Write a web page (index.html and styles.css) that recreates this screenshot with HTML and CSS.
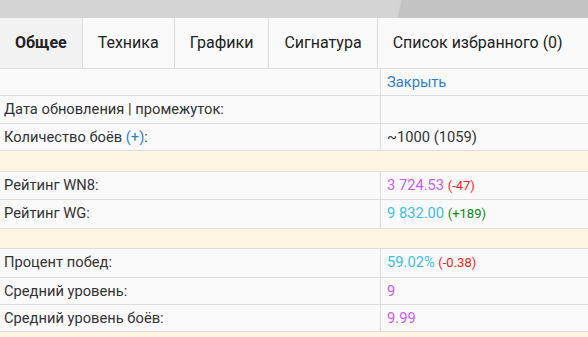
FILE: index.html
```html
<!DOCTYPE html>
<html lang="ru">
<head>
    <meta charset="UTF-8">
    <title>Статистика</title>
    <link rel="stylesheet" href="styles.css">
</head>
<body>
<div class="backdrop"></div>
<div class="panel">
    <ul class="tabs">
        <li class="active"><a href="#">Общее</a></li>
        <li><a href="#">Техника</a></li>
        <li><a href="#">Графики</a></li>
        <li><a href="#">Сигнатура</a></li>
        <li><a href="#">Список избранного (0)</a></li>
    </ul>
    <table class="stats">
        <tr>
            <td class="name"></td>
            <td><a href="#">Закрыть</a></td>
        </tr>
        <tr>
            <td class="name">Дата обновления | промежуток:</td>
            <td></td>
        </tr>
        <tr>
            <td class="name">Количество боёв <a href="#">(+)</a>:</td>
            <td>~1000 (1059)</td>
        </tr>
        <tr class="sep"><td></td><td></td></tr>
        <tr>
            <td class="name">Рейтинг WN8:</td>
            <td><span class="purple">3 724.53</span> <span class="diff minus">(-47)</span></td>
        </tr>
        <tr>
            <td class="name">Рейтинг WG:</td>
            <td><span class="cyan">9 832.00</span> <span class="diff plus">(+189)</span></td>
        </tr>
        <tr class="sep"><td></td><td></td></tr>
        <tr>
            <td class="name">Процент побед:</td>
            <td><span class="cyan">59.02%</span> <span class="diff minus">(-0.38)</span></td>
        </tr>
        <tr>
            <td class="name">Средний уровень:</td>
            <td><span class="purple">9</span></td>
        </tr>
        <tr>
            <td class="name">Средний уровень боёв:</td>
            <td><span class="purple">9.99</span></td>
        </tr>
        <tr class="sep"><td></td><td></td></tr>
    </table>
</div>
</body>
</html>
```

FILE: styles.css
```css
* {
    margin: 0;
    padding: 0;
}

a {
    text-decoration: none;
    color: #2f7fcf;
}

ul, li {
    list-style: none;
}

body {
    font-family: Roboto, "Liberation Sans", Arial, sans-serif;
    font-size: 14.7px;
    color: #333;
    background: #d3d3d3;
    overflow: hidden;
}

.backdrop {
    height: 18px;
    background: linear-gradient(100deg, #d4d4d4 0, #d4d4d4 394px, #c3c3c3 396px, #c3c3c3 100%);
}

.panel {
    background: #fafafa;
}

.tabs {
    display: flex;
    height: 50px;
    border-bottom: 1px solid #dddddd;
    font-size: 16px;
}

.tabs li {
    border-right: 1px solid #dddddd;
}

.tabs li:last-child {
    border-right: none;
}

.tabs a {
    display: block;
    line-height: 50px;
    padding: 0 15px;
    color: #222;
}

.tabs li.active a {
    background: #f2f2f2;
    font-weight: bold;
}

.stats {
    width: 100%;
    border-collapse: collapse;
}

.stats td {
    padding: 3px 5px 3px 6px;
    line-height: 20.4px;
    border-bottom: 1px solid #dddddd;
    vertical-align: top;
}

.stats td.name {
    width: 371px;
    padding-left: 4px;
    border-right: 1px solid #dddddd;
}

.stats tr.sep td {
    height: 13.6px;
    background: #fcf6e2;
}

.purple {
    color: #c85cf2;
}

.cyan {
    color: #3fbfe3;
}

.diff {
    font-size: 13px;
}

.minus {
    color: #ff1a1a;
}

.plus {
    color: #0b8a0b;
}
```
